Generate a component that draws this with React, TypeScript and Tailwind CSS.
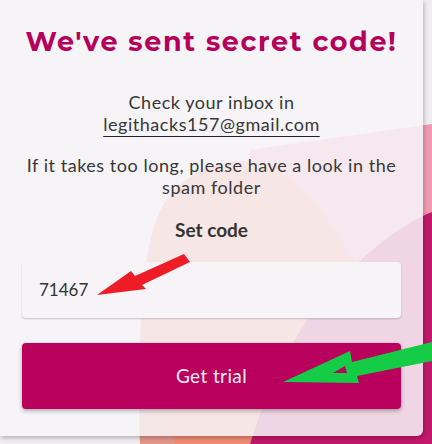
import React from 'react';

const body = { fontFamily: 'Lato, "Open Sans", sans-serif' };

function Backdrop() {
  return (
    <svg className="absolute inset-0" width="432" height="444" viewBox="0 0 432 444">
      <rect width="432" height="444" fill="#efedf0" />
      {/* pink band on the right */}
      <path d="M250 150 L432 124 L432 444 L250 444 Z" fill="#f09ab4" />
      {/* salmon blob */}
      <path d="M140 444 C138 330 140 230 170 195 C200 160 250 150 285 175 C320 200 340 240 360 270 L300 444 Z" fill="#ef8c73" />
      <path d="M140 444 C139 400 140 370 142 340 L175 444 Z" fill="#e3958a" />
      {/* magenta wave */}
      <path d="M250 444 C270 380 300 320 340 280 C370 250 400 225 432 212 L432 444 Z" fill="#c2186b" />
    </svg>
  );
}

function Arrows() {
  return (
    <svg className="absolute inset-0 pointer-events-none" width="432" height="444" viewBox="0 0 432 444">
      {/* red arrow */}
      <path d="M184 254 L190 262 L142 285 L146 289 L97 295 L131 271 L135 276 Z" fill="#ee1c24" />
      {/* green arrow */}
      <path
        fillRule="evenodd"
        d="M432 342 L432 361 L357 376 L359 383 L283 382 L350 351 L352 362 Z M333 373 L345 366 L347 373 Z"
        fill="#14cc45"
      />
    </svg>
  );
}

export default function App() {
  return (
    <div className="relative w-[432px] h-[444px] overflow-hidden">
      <Backdrop />

      <div className="relative w-[423px] h-[436px] rounded-br-md bg-[#f7f4f8]/[0.86] shadow-[1px_2px_4px_rgba(0,0,0,0.25)] flex flex-col items-center">
        <h1
          className="mt-[24px] text-[27px] font-bold tracking-[0.06em] text-[#b5005b] leading-[36px]"
          style={{ fontFamily: 'Montserrat, "Open Sans", sans-serif' }}
        >
          We've sent secret code!
        </h1>

        <p className="mt-[31px] text-center text-[18px] leading-[22px] tracking-[0.03em] text-[#383838]" style={body}>
          Check your inbox in
          <br />
          <a href="#" className="underline decoration-[#222] decoration-1 underline-offset-[5px]">
            legithacks157@gmail.com
          </a>
        </p>

        <p className="mt-[19px] px-4 text-center text-[18px] leading-[22px] tracking-[0.03em] text-[#383838]" style={body}>
          If it takes too long, please have a look in the spam folder
        </p>

        <h2
          className="mt-[20px] text-[19px] font-bold text-[#333] leading-[24px]"
          style={body}
        >
          Set code
        </h2>

        <div className="mt-[20px] w-[379px] h-[56px] rounded-[4px] bg-[#f7f4f8] shadow-[0_1px_2px_rgba(0,0,0,0.2)] flex items-center px-[17px]">
          <span className="text-[17px] text-[#333]" style={body}>71467</span>
        </div>

        <button
          className="mt-[25px] w-[379px] h-[66px] rounded-[4px] bg-[#b8005c] shadow-[0_2px_4px_rgba(0,0,0,0.3)] text-[19px] tracking-[0.02em] text-[#f7eef3]"
          style={body}
        >
          Get trial
        </button>
      </div>

      <Arrows />
    </div>
  );
}
